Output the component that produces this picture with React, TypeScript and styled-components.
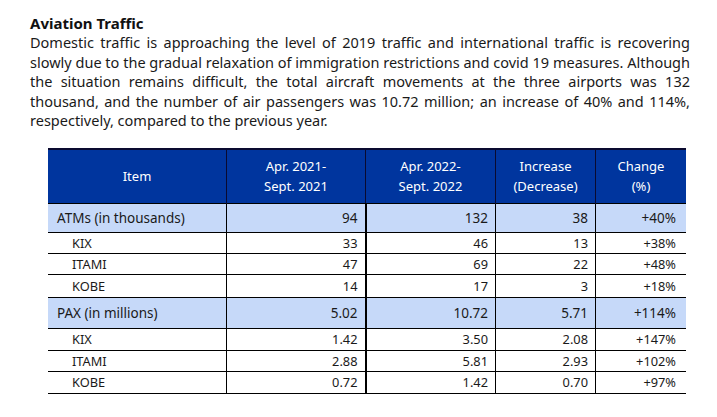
import React from "react";
import styled, { createGlobalStyle } from "styled-components";

const Global = createGlobalStyle`
  html, body { margin: 0; padding: 0; background: #ffffff; }
  body { font-family: "Noto Sans", "Open Sans", sans-serif; color: #1a1a1a; }
`;

const Page = styled.div`
  width: 717px;
  height: 417px;
  box-sizing: border-box;
  padding: 13px 27px 0 30px;
  display: flex;
  flex-direction: column;
`;

const Title = styled.h2`
  margin: 0;
  font-size: 15px;
  line-height: 20px;
  font-weight: bold;
  color: #111;
`;

const Para = styled.div`
  font-size: 14.5px;
  line-height: 19.5px;
  color: #1a1a1a;
`;

const Line = styled.span<{ $last?: boolean }>`
  display: block;
  white-space: nowrap;
  text-align: ${(p) => (p.$last ? "left" : "justify")};
  text-align-last: ${(p) => (p.$last ? "left" : "justify")};
`;

const Table = styled.table`
  margin: 17px 0 0 18px;
  width: 634px;
  border-collapse: collapse;
  table-layout: fixed;
  font-size: 13px;
  border-top: 2px solid #0a0a30;
`;

const HeadCell = styled.th<{ $w: number }>`
  width: ${(p) => p.$w}px;
  background: #00359e;
  color: #ffffff;
  font-weight: normal;
  font-size: 13px;
  line-height: 20px;
  height: 53px;
  padding: 0;
  text-align: center;
  vertical-align: middle;
  border-left: 1px solid #0a0a30;
  &:first-child { border-left: none; }
`;

const Row = styled.tr<{ $group?: boolean; $h: number }>`
  height: ${(p) => p.$h}px;
  background: ${(p) => (p.$group ? "#c6d9f9" : "#ffffff")};
  border-top: 1px solid #000;
  font-size: ${(p) => (p.$group ? "13.5px" : "12.8px")};
  &:last-child { border-bottom: 1px solid #000; }
`;

const ItemCell = styled.td<{ $sub?: boolean }>`
  padding: 0 0 0 ${(p) => (p.$sub ? "24px" : "9px")};
  text-align: left;
  vertical-align: middle;
  color: #1a1a1a;
`;

const NumCell = styled.td<{ $thick?: boolean; $pad?: number }>`
  padding: 0 ${(p) => p.$pad ?? 7}px 0 0;
  text-align: right;
  vertical-align: middle;
  border-left: ${(p) => (p.$thick ? 2 : 1)}px solid #000;
  color: #1a1a1a;
`;

type R = { item: string; sub?: boolean; a: string; b: string; c: string; d: string; h: number };

const rows: R[] = [
  { item: "ATMs (in thousands)", a: "94", b: "132", c: "38", d: "+40%", h: 29 },
  { item: "KIX", sub: true, a: "33", b: "46", c: "13", d: "+38%", h: 21 },
  { item: "ITAMI", sub: true, a: "47", b: "69", c: "22", d: "+48%", h: 21 },
  { item: "KOBE", sub: true, a: "14", b: "17", c: "3", d: "+18%", h: 23 },
  { item: "PAX (in millions)", a: "5.02", b: "10.72", c: "5.71", d: "+114%", h: 31 },
  { item: "KIX", sub: true, a: "1.42", b: "3.50", c: "2.08", d: "+147%", h: 22 },
  { item: "ITAMI", sub: true, a: "2.88", b: "5.81", c: "2.93", d: "+102%", h: 21 },
  { item: "KOBE", sub: true, a: "0.72", b: "1.42", c: "0.70", d: "+97%", h: 22 },
];

const lines = [
  "Domestic traffic is approaching the level of 2019 traffic and international traffic is recovering",
  "slowly due to the gradual relaxation of immigration restrictions and covid 19 measures. Although",
  "the situation remains difficult, the total aircraft movements at the three airports was 132",
  "thousand, and the number of air passengers was 10.72 million; an increase of 40% and 114%,",
  "respectively, compared to the previous year.",
];

export default function App() {
  return (
    <>
      <Global />
      <Page>
        <Title>Aviation Traffic</Title>
        <Para>
          {lines.map((l, i) => (
            <Line key={i} $last={i === lines.length - 1}>{l}</Line>
          ))}
        </Para>
        <Table>
          <thead>
            <tr>
              <HeadCell $w={178}>Item</HeadCell>
              <HeadCell $w={138}>Apr. 2021-<br />Sept. 2021</HeadCell>
              <HeadCell $w={129}>Apr. 2022-<br />Sept. 2022</HeadCell>
              <HeadCell $w={99}>Increase<br />(Decrease)</HeadCell>
              <HeadCell $w={90}>Change<br />(%)</HeadCell>
            </tr>
          </thead>
          <tbody>
            {rows.map((r, i) => (
              <Row key={i} $group={!r.sub} $h={r.h}>
                <ItemCell $sub={r.sub}>{r.item}</ItemCell>
                <NumCell>{r.a}</NumCell>
                <NumCell $thick>{r.b}</NumCell>
                <NumCell>{r.c}</NumCell>
                <NumCell $pad={10}>{r.d}</NumCell>
              </Row>
            ))}
          </tbody>
        </Table>
      </Page>
    </>
  );
}
